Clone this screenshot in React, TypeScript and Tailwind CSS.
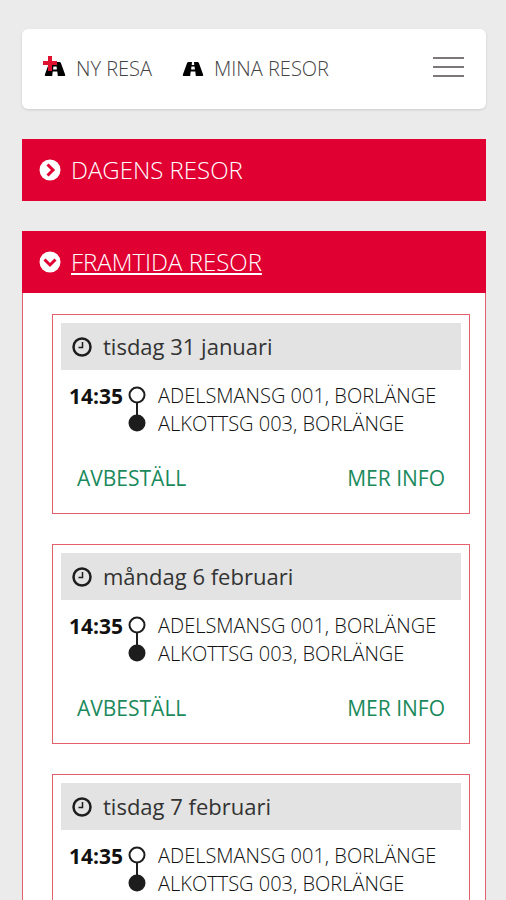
import { useState } from "react";

const trips = [
  { id: 1, date: 'tisdag 31 januari', time: '14:35', from: 'ADELSMANSG 001, BORLÄNGE', to: 'ALKOTTSG 003, BORLÄNGE' },
  { id: 2, date: 'måndag 6 februari', time: '14:35', from: 'ADELSMANSG 001, BORLÄNGE', to: 'ALKOTTSG 003, BORLÄNGE' },
  { id: 3, date: 'tisdag 7 februari', time: '14:35', from: 'ADELSMANSG 001, BORLÄNGE', to: 'ALKOTTSG 003, BORLÄNGE' },
];

function RoadIcon({ plus }: { plus?: boolean }) {
  return (
    <svg width="26" height="26" viewBox="0 0 26 26" aria-hidden="true">
      <path
        fillRule="evenodd"
        d="M8.500 6H12l-.3 3h2.600L14 6h3.500q1 0 1.400 1l4.200 11.500q.5 1.500-.8 1.500h-6.500l-.5-4.500h-4.600L10.200 20H3.700q-1.300 0-.8-1.500L7.100 7q.4-1 1.400-1zM11.400 10.500l-.3 3h3.800l-.3-3z"
        fill="#000"
      />
      {plus && (
        <path d="M6 0h4v5h5v4h-5v6H6V9H1V5h5z" fill="#e0112f" />
      )}
    </svg>
  )
}

function ChevronCircle({ open }: { open: boolean }) {
  return (
    <svg width="22" height="22" viewBox="0 0 22 22" aria-hidden="true">
      <circle cx="11" cy="11" r="10.500" fill="#fff" />
      <path d={open ? 'M5.500 8.500l5.500 5.500 5.500-5.500' : 'M8.500 5.500l5.500 5.500-5.500 5.500'} fill="none" stroke="#e10032" strokeWidth="3" />
    </svg>
  )
}

function ClockIcon() {
  return (
    <svg width="20" height="20" viewBox="0 0 20 20" fill="none" stroke="#1d1d1d" aria-hidden="true">
      <circle cx="10" cy="10" r="8.500" strokeWidth="2.500" />
      <path d="M10.500 5v5.500H6.500" strokeWidth="1.500" />
    </svg>
  )
}

function RouteIcon() {
  return (
    <svg width="18" height="46" viewBox="0 0 18 46" aria-hidden="true">
      <path d="M9 17v14" stroke="#1d1d1d" strokeWidth="2" />
      <circle cx="9" cy="9" r="7.500" fill="#fff" stroke="#1d1d1d" strokeWidth="2" />
      <circle cx="9" cy="37" r="8.500" fill="#1d1d1d" />
    </svg>
  )
}

function TripCard({ trip }: { trip: typeof trips[0] }) {
  return (
    <article className="border border-[#e2606c] px-2 pt-2 pb-[21px]">
      <h3 className="flex items-center gap-[11px] bg-[#e3e3e3] px-[11px] py-2 text-[22px] leading-[31px] text-[#333]">
        <ClockIcon />
        {trip.date}
      </h3>
      <div className="flex px-2 pt-3 text-[20px] leading-7 text-[#111]">
        <span className="w-[59px] text-[21px] font-bold">{trip.time}</span>
        <div className="pt-1">
          <RouteIcon />
        </div>
        <div className="min-w-0 flex-1 pl-3 font-light">
          <p>{trip.from}</p>
          <p>{trip.to}</p>
        </div>
      </div>
      <div className="flex justify-between px-4 pt-[26px] text-[21px] leading-7 text-[#1a8a5c]">
        <button type="button">AVBESTÄLL</button>
        <button type="button">MER INFO</button>
      </div>
    </article>
  )
}

export default function App() {

  const [todayOpen, setTodayOpen] = useState(false);
  const [futureOpen, setFutureOpen] = useState(true);

  return (
    <div className="min-h-screen bg-[#ebebeb] pt-[29px] pr-5 pl-[22px] font-['Open_Sans',sans-serif]">
      <div className="flex flex-col gap-[30px]">
        <header className="flex h-20 items-center justify-between rounded-md bg-white pr-[22px] pl-5 shadow-sm">
          <nav className="flex gap-7 text-[20px] font-light text-[#444]">
            <a href="#ny" className="flex items-center gap-2">
              <RoadIcon plus />
              NY RESA
            </a>
            <a href="#mina" className="flex items-center gap-2">
              <RoadIcon />
              MINA RESOR
            </a>
          </nav>
          <button type="button" aria-label="Meny" className="mb-1 flex flex-col gap-[7px]">
            <span className="h-[2px] w-[31px] bg-[#7c7779]" />
            <span className="h-[2px] w-[31px] bg-[#7c7779]" />
            <span className="h-[2px] w-[31px] bg-[#7c7779]" />
          </button>
        </header>

        <section>
          <button
            type="button"
            aria-expanded={todayOpen}
            onClick={() => setTodayOpen(!todayOpen)}
            className="flex w-full items-center gap-[10px] bg-[#e10032] px-[17px] py-[15px] text-2xl font-light text-white"
          >
            <ChevronCircle open={todayOpen} />
            DAGENS RESOR
          </button>
        </section>

        <section>
          <button
            type="button"
            aria-expanded={futureOpen}
            onClick={() => setFutureOpen(!futureOpen)}
            className="flex w-full items-center gap-[10px] bg-[#e10032] px-[17px] py-[15px] text-2xl font-light text-white"
          >
            <ChevronCircle open={futureOpen} />
            <span className="underline">FRAMTIDA RESOR</span>
          </button>
          {futureOpen && (
            <div className="flex flex-col gap-[30px] border border-t-0 border-[#e2606c] bg-white pt-[21px] pr-[15px] pb-7 pl-[29px]">
              {trips.map((trip) => (
                <TripCard key={trip.id} trip={trip} />
              ))}
            </div>
          )}
        </section>
      </div>
    </div>
  );
}
